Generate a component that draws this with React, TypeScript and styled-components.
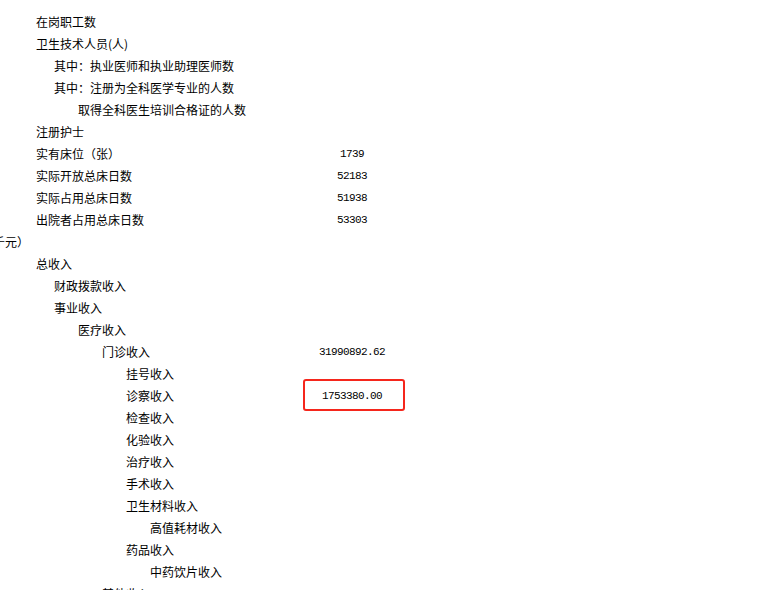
import React from "react";
import styled, { createGlobalStyle } from "styled-components";

const GlobalStyle = createGlobalStyle`
  html, body {
    margin: 0;
    padding: 0;
    background: #ffffff;
    overflow: hidden;
  }
  body {
    font-family: "Noto Sans CJK SC", "Noto Sans", sans-serif;
    color: #000000;
  }
`;

const Sheet = styled.div`
  display: grid;
  grid-template-columns: 302px 100px;
  grid-auto-rows: 22px;
  margin-top: -11px;
  width: 766px;
`;

const Label = styled.div<{ $indent: number }>`
  padding-left: ${(p) => p.$indent}px;
  font-size: 12px;
  line-height: 22px;
  white-space: nowrap;
`;

const HeaderLabel = styled.div<{ $end: number }>`
  grid-column: 1 / span 2;
  width: ${(p) => p.$end}px;
  display: flex;
  justify-content: flex-end;
  font-size: 12px;
  line-height: 22px;
  white-space: nowrap;
`;

const Value = styled.div<{ $marked?: boolean }>`
  position: relative;
  text-align: center;
  font-family: "Liberation Mono", "DejaVu Sans Mono", monospace;
  font-size: 11px;
  letter-spacing: -0.6px;
  line-height: 22px;
  white-space: nowrap;
  ${(p) =>
    p.$marked
      ? `
  &::after {
    content: "";
    position: absolute;
    left: 1px;
    right: -3px;
    top: -6px;
    bottom: -4px;
    border: 2px solid #f5261c;
    border-radius: 3px;
  }`
      : ""}
`;

type Row =
  | { kind: "header"; text: string; end: number }
  | { kind: "item"; text: string; level: number; value?: string; marked?: boolean };

const indents = [0, 36, 54, 78, 102, 126, 150];

const rows: Row[] = [
  { kind: "header", text: "一、人力资源（人）", end: 7 },
  { kind: "item", text: "在岗职工数", level: 1 },
  { kind: "item", text: "卫生技术人员(人)", level: 1 },
  { kind: "item", text: "其中：执业医师和执业助理医师数", level: 2 },
  { kind: "item", text: "其中：注册为全科医学专业的人数", level: 2 },
  { kind: "item", text: "取得全科医生培训合格证的人数", level: 3 },
  { kind: "item", text: "注册护士", level: 1 },
  { kind: "item", text: "实有床位（张）", level: 1, value: "1739" },
  { kind: "item", text: "实际开放总床日数", level: 1, value: "52183" },
  { kind: "item", text: "实际占用总床日数", level: 1, value: "51938" },
  { kind: "item", text: "出院者占用总床日数", level: 1, value: "53303" },
  { kind: "header", text: "二、收入与费用（千元）", end: 29 },
  { kind: "item", text: "总收入", level: 1 },
  { kind: "item", text: "财政拨款收入", level: 2 },
  { kind: "item", text: "事业收入", level: 2 },
  { kind: "item", text: "医疗收入", level: 3 },
  { kind: "item", text: "门诊收入", level: 4, value: "31990892.62" },
  { kind: "item", text: "挂号收入", level: 5 },
  { kind: "item", text: "诊察收入", level: 5, value: "1753380.00", marked: true },
  { kind: "item", text: "检查收入", level: 5 },
  { kind: "item", text: "化验收入", level: 5 },
  { kind: "item", text: "治疗收入", level: 5 },
  { kind: "item", text: "手术收入", level: 5 },
  { kind: "item", text: "卫生材料收入", level: 5 },
  { kind: "item", text: "高值耗材收入", level: 6 },
  { kind: "item", text: "药品收入", level: 5 },
  { kind: "item", text: "中药饮片收入", level: 6 },
  { kind: "item", text: "其他收入", level: 4 },
];

export default function App() {
  return (
    <>
      <GlobalStyle />
      <Sheet>
        {rows.map((r, i) =>
          r.kind === "header" ? (
            <HeaderLabel key={i} $end={r.end}>
              <span>{r.text}</span>
            </HeaderLabel>
          ) : (
            <React.Fragment key={i}>
              <Label $indent={indents[r.level]}>{r.text}</Label>
              <Value $marked={r.marked}>{r.value ?? ""}</Value>
            </React.Fragment>
          )
        )}
      </Sheet>
    </>
  );
}
